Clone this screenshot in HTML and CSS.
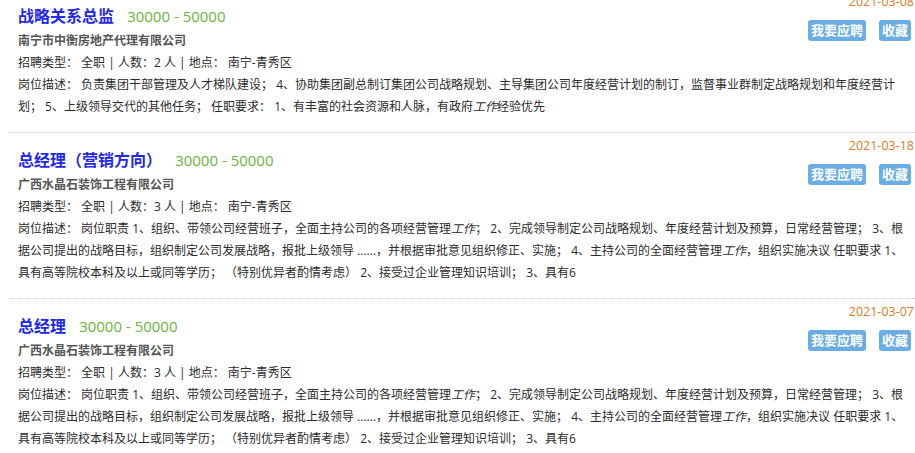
FILE: index.html
```html
<!DOCTYPE html>
<html lang="zh-CN">
<head>
    <meta charset="UTF-8">
    <meta name="viewport" content="width=device-width, initial-scale=1.0">
    <title>职位列表</title>
    <link rel="stylesheet" href="styles.css">
</head>
<body>

    <!-- job list -->
    <ul class="job-list">
        <li class="job-item">
            <div class="job-top">
                <div class="job-main">
                    <div class="job-head">
                        <a class="job-name" href="#">战略关系总监</a>
                        <span class="salary">30000 - 50000</span>
                    </div>
                    <p class="company">南宁市中衡房地产代理有限公司</p>
                    <p class="info">招聘类型： 全职 | 人数：2 人 | 地点： 南宁-青秀区</p>
                </div>
                <div class="job-side">
                    <p class="date">2021-03-08</p>
                    <div class="actions">
                        <a class="btn" href="#">我要应聘</a>
                        <a class="btn" href="#">收藏</a>
                    </div>
                </div>
            </div>
            <p class="desc">岗位描述： 负责集团干部管理及人才梯队建设； 4、协助集团副总制订集团公司战略规划、主导集团公司年度经营计划的制订，监督事业群制定战略规划和年度经营计划； 5、上级领导交代的其他任务； 任职要求： 1、有丰富的社会资源和人脉，有政府<em>工作</em>经验优先</p>
        </li>

        <li class="job-item">
            <div class="job-top">
                <div class="job-main">
                    <div class="job-head">
                        <a class="job-name" href="#">总经理（营销方向）</a>
                        <span class="salary">30000 - 50000</span>
                    </div>
                    <p class="company">广西水晶石装饰工程有限公司</p>
                    <p class="info">招聘类型： 全职 | 人数：3 人 | 地点： 南宁-青秀区</p>
                </div>
                <div class="job-side">
                    <p class="date">2021-03-18</p>
                    <div class="actions">
                        <a class="btn" href="#">我要应聘</a>
                        <a class="btn" href="#">收藏</a>
                    </div>
                </div>
            </div>
            <p class="desc">岗位描述： 岗位职责 1、组织、带领公司经营班子，全面主持公司的各项经营管理<em>工作</em>； 2、完成领导制定公司战略规划、年度经营计划及预算，日常经营管理； 3、根据公司提出的战略目标，组织制定公司发展战略，报批上级领导 ......，并根据审批意见组织修正、实施； 4、主持公司的全面经营管理<em>工作</em>，组织实施决议 任职要求 1、具有高等院校本科及以上或同等学历； （特别优异者酌情考虑） 2、接受过企业管理知识培训； 3、具有6</p>
        </li>

        <li class="job-item">
            <div class="job-top">
                <div class="job-main">
                    <div class="job-head">
                        <a class="job-name" href="#">总经理</a>
                        <span class="salary">30000 - 50000</span>
                    </div>
                    <p class="company">广西水晶石装饰工程有限公司</p>
                    <p class="info">招聘类型： 全职 | 人数：3 人 | 地点： 南宁-青秀区</p>
                </div>
                <div class="job-side">
                    <p class="date">2021-03-07</p>
                    <div class="actions">
                        <a class="btn" href="#">我要应聘</a>
                        <a class="btn" href="#">收藏</a>
                    </div>
                </div>
            </div>
            <p class="desc">岗位描述： 岗位职责 1、组织、带领公司经营班子，全面主持公司的各项经营管理<em>工作</em>； 2、完成领导制定公司战略规划、年度经营计划及预算，日常经营管理； 3、根据公司提出的战略目标，组织制定公司发展战略，报批上级领导 ......，并根据审批意见组织修正、实施； 4、主持公司的全面经营管理<em>工作</em>，组织实施决议 任职要求 1、具有高等院校本科及以上或同等学历； （特别优异者酌情考虑） 2、接受过企业管理知识培训； 3、具有6</p>
        </li>
    </ul>

</body>
</html>
```

FILE: styles.css
```css
body {
    margin: 0;
    padding: 0;
    background-color: #fff;
    font-family: "Open Sans", "Noto Sans CJK SC", sans-serif;
    font-size: 12px;
    color: #2b2b2b;
    overflow: hidden;
}
p {
    margin: 0;
}
.job-list {
    list-style: none;
    margin: -11px 0 0 8px; /* list is scrolled a little */
    padding: 0;
}
.job-item {
    border-bottom: 1px dotted #c8c8c8;
    padding: 4px 1px 14px 10px;
}
.job-top {
    display: flex;
    justify-content: space-between;
}
.job-main {
    padding-top: 11px;
}
.job-head {
    line-height: 24px;
}
.job-name {
    font-size: 16px;
    font-weight: bold;
    color: #2228e6;
    text-decoration: none;
}
.salary {
    font-size: 15px;
    color: #6db33f;
    margin-left: 10px;
}
.company {
    line-height: 22px;
    font-weight: bold;
    color: #555;
}
.info {
    line-height: 22px;
}
.job-side {
    display: flex;
    flex-direction: column;
    align-items: flex-end;
}
.date {
    font-size: 12.5px;
    line-height: 18px;
    color: #e07b22;
}
.actions {
    display: flex;
    gap: 13px;
    margin-top: 9px;
    margin-right: 3px;
}
.btn {
    display: block;
    height: 21px;
    line-height: 21px;
    padding: 0 3px;
    background-color: #6aade4;
    border-radius: 3px;
    color: #fff;
    font-size: 13px;
    font-weight: bold;
    text-decoration: none;
}
.desc {
    line-height: 22px;
    padding-right: 4px;
}
.desc em {
    font-style: italic;
}
```
